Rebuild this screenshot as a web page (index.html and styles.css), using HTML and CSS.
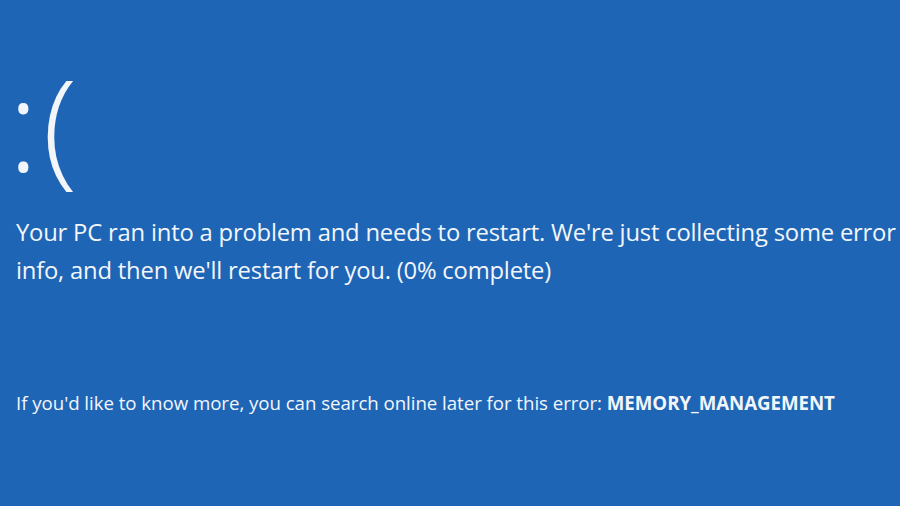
FILE: index.html
```html
<!DOCTYPE html>
<html lang="en">
<head>
    <meta charset="UTF-8">
    <meta name="viewport" content="width=device-width, initial-scale=1.0">
    <title>Stop code</title>
    <link rel="stylesheet" href="styles.css">
</head>
<body>
    <div class="screen">
        <div class="face">:(</div>
        <p class="message">Your PC ran into a problem and needs to restart. We're just collecting some error info, and then we'll restart for you. (0% complete)</p>
        <p class="details">If you'd like to know more, you can search online later for this error: <strong>MEMORY_MANAGEMENT</strong></p>
    </div>
</body>
</html>
```

FILE: styles.css
```css
html, body {
    margin: 0;
    height: 100%;
}

body {
    background-color: #1f65b5;
    color: #f2f6fb;
    font-family: "Open Sans", "Noto Sans", sans-serif;
    overflow: hidden;
}

.screen {
    display: flex;
    flex-direction: column;
    padding: 53px 0 0 8px;
}

.face {
    font-size: 128px;
    font-weight: 300;
    line-height: 140px;
    letter-spacing: 4px;
}

.message {
    margin: 20px 0 0 0;
    padding-left: 8px;
    width: 890px;
    font-size: 23.8px;
    font-weight: 400;
    line-height: 38px;
    letter-spacing: -0.2px;
}

.details {
    margin: 101px 0 0 0;
    padding-left: 8px;
    font-size: 18.7px;
    line-height: 25px;
    letter-spacing: -0.05px;
}

.details strong {
    font-weight: 700;
}
```
